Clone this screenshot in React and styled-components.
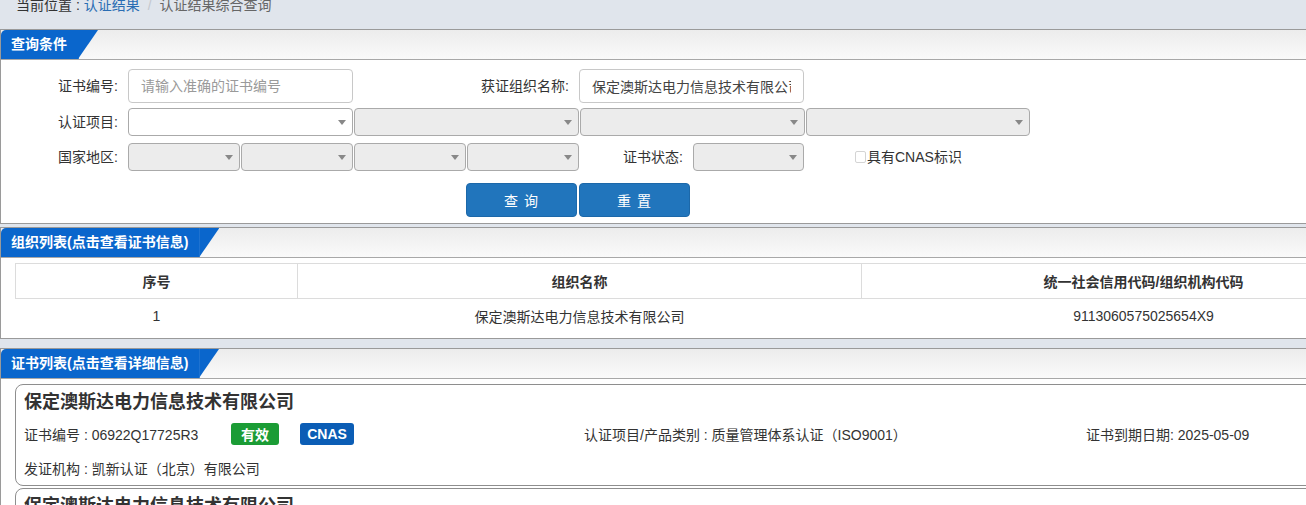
import React from "react";
import styled, { createGlobalStyle } from "styled-components";

const GlobalStyle = createGlobalStyle`
  html, body { margin: 0; padding: 0; overflow: hidden; background: #e0e5ec; }
  body {
    font-family: "Liberation Sans", "Noto Sans CJK SC", sans-serif;
    font-size: 14px;
    color: #333;
  }
  * { box-sizing: border-box; }
`;

const Page = styled.div`
  width: 1441px;
`;

const Breadcrumb = styled.div`
  height: 29px;
  padding-left: 16px;
  line-height: 11px;
  color: #333;
  font-size: 14px;
`;

const Crumb = styled.span`
  color: ${(p) => p.$color || "#333"};
`;

const Sep = styled.span`
  color: #c4c8ce;
  margin: 0 8px;
`;

const Panel = styled.section`
  background: #fff;
  border: 1px solid #9a9a9a;
  margin-bottom: ${(p) => p.$gap || 0}px;
`;

const PanelHeader = styled.div`
  height: 30px;
  display: flex;
  background: linear-gradient(#ececec, #fafafa);
  border-bottom: 1px solid #a8a8a8;
`;

const Tab = styled.div`
  position: relative;
  height: 29px;
  line-height: 29px;
  padding: 0 11px 0 10px;
  background: #0a66cc;
  color: #fff;
  font-weight: bold;
  font-size: 14px;
  border-top-left-radius: 5px;
  border-right: 1px solid #4d8fd9;
  &::after {
    content: "";
    position: absolute;
    left: 100%;
    top: 0;
    width: 20px;
    height: 29px;
    background: #0a66cc;
    clip-path: polygon(0 0, 100% 0, 0 100%);
  }
`;

const FormBody = styled.div`
  padding: 9px 0 6px;
  display: flex;
  flex-direction: column;
`;

const FormRow = styled.div`
  display: flex;
  align-items: center;
  height: ${(p) => p.$h}px;
  margin-top: ${(p) => p.$mt || 0}px;
`;

const Label = styled.label`
  width: ${(p) => p.$w}px;
  padding-right: 10px;
  text-align: right;
  color: #333;
  font-size: 14px;
  line-height: 20px;
  flex-shrink: 0;
`;

const TextInput = styled.input`
  width: ${(p) => p.$w}px;
  height: 34px;
  border: 1px solid #c8c8c8;
  border-radius: 4px;
  padding: 0 12px;
  font-family: inherit;
  font-size: 14px;
  color: #444;
  background: #fff;
  outline: none;
  &::placeholder { color: #9a9a9a; }
`;

const SelectBox = styled.div`
  position: relative;
  width: ${(p) => p.$w}px;
  height: 28px;
  border: 1px solid #aaa;
  border-radius: 4px;
  background: ${(p) => (p.$disabled ? "#ececec" : "#fff")};
  flex-shrink: 0;
  &::after {
    content: "";
    position: absolute;
    right: 6px;
    top: 11px;
    border-left: 4px solid transparent;
    border-right: 4px solid transparent;
    border-top: 5px solid #888;
  }
`;

const Group = styled.div`
  display: flex;
  gap: 1px;
`;

const CheckWrap = styled.label`
  display: flex;
  align-items: center;
  margin-left: 51px;
  font-size: 14px;
  line-height: 20px;
  color: #333;
`;

const Check = styled.span`
  width: 11px;
  height: 12px;
  border: 1px solid #d4d4d4;
  border-radius: 2px;
  background: #fff;
  margin-right: 1px;
`;

const ButtonRow = styled.div`
  display: flex;
  gap: 2px;
  margin: 12px 0 0 465px;
`;

const Button = styled.button`
  width: 111px;
  height: 34px;
  background: #2175bc;
  border: 1px solid #1c68a9;
  border-radius: 4px;
  color: #fff;
  font-family: inherit;
  font-size: 14px;
  letter-spacing: 1px;
  cursor: pointer;
`;

const TableBody = styled.div`
  padding: 5px 14px 5px;
`;

const Table = styled.table`
  width: 1411px;
  border-collapse: collapse;
  font-size: 14px;
  color: #333;
`;

const Th = styled.th`
  width: ${(p) => p.$w};
  height: 35px;
  border: 1px solid #dcdcdc;
  font-weight: bold;
  text-align: center;
`;

const Td = styled.td`
  height: 34px;
  text-align: center;
`;

const CardList = styled.div`
  padding: 5px 14px 0;
  display: flex;
  flex-direction: column;
  gap: 2px;
`;

const Card = styled.div`
  border: 1px solid #8e8e8e;
  border-radius: 8px;
  padding: 6px 8px 6px;
`;

const CardTitle = styled.div`
  font-size: 18px;
  font-weight: bold;
  line-height: 22px;
  color: #333;
`;

const CardRow = styled.div`
  display: flex;
  align-items: center;
  height: 22px;
  margin-top: ${(p) => p.$mt}px;
  font-size: 14px;
  color: #333;
`;

const Cell = styled.span`
  width: ${(p) => (p.$w ? `${p.$w}px` : "auto")};
  flex-shrink: 0;
  white-space: nowrap;
`;

const Badge = styled.span`
  display: inline-flex;
  align-items: center;
  justify-content: center;
  width: ${(p) => p.$w}px;
  height: 22px;
  margin-right: ${(p) => p.$mr || 0}px;
  border-radius: 3px;
  background: ${(p) => p.$bg};
  color: #fff;
  font-weight: bold;
  font-size: 14px;
  flex-shrink: 0;
`;

function Select({ w, disabled }) {
  return <SelectBox $w={w} $disabled={disabled} />;
}

function CertCard() {
  return (
    <Card>
      <CardTitle>保定澳斯达电力信息技术有限公司</CardTitle>
      <CardRow $mt={10}>
        <Cell $w={207}>证书编号 : 06922Q17725R3</Cell>
        <Badge $w={48} $mr={21} $bg="#1b9c35">有效</Badge>
        <Badge $w={54} $bg="#0b5db5">CNAS</Badge>
        <Cell $w={230} />
        <Cell $w={502}>认证项目/产品类别 : 质量管理体系认证（ISO9001）</Cell>
        <Cell>证书到期日期: 2025-05-09</Cell>
      </CardRow>
      <CardRow $mt={12}>
        <Cell>发证机构 : 凯新认证（北京）有限公司</Cell>
      </CardRow>
    </Card>
  );
}

export default function App() {
  return (
    <Page>
      <GlobalStyle />
      <Breadcrumb>
        <Crumb>当前位置 : </Crumb>
        <Crumb $color="#2a6db3">认证结果</Crumb>
        <Sep>/</Sep>
        <Crumb $color="#666">认证结果综合查询</Crumb>
      </Breadcrumb>

      <Panel $gap={3}>
        <PanelHeader>
          <Tab>查询条件</Tab>
        </PanelHeader>
        <FormBody>
          <FormRow $h={34}>
            <Label $w={127}>证书编号:</Label>
            <TextInput $w={225} placeholder="请输入准确的证书编号" />
            <Label $w={226}>获证组织名称:</Label>
            <TextInput $w={225} defaultValue="保定澳斯达电力信息技术有限公司" />
          </FormRow>
          <FormRow $h={28} $mt={5}>
            <Label $w={127}>认证项目:</Label>
            <Group>
              <Select w={225} />
              <Select w={225} disabled />
              <Select w={225} disabled />
              <Select w={224} disabled />
            </Group>
          </FormRow>
          <FormRow $h={28} $mt={7}>
            <Label $w={127}>国家地区:</Label>
            <Group>
              <Select w={112} disabled />
              <Select w={112} disabled />
              <Select w={112} disabled />
              <Select w={112} disabled />
            </Group>
            <Label $w={114}>证书状态:</Label>
            <Select w={111} disabled />
            <CheckWrap>
              <Check />
              具有CNAS标识
            </CheckWrap>
          </FormRow>
          <ButtonRow>
            <Button>查 询</Button>
            <Button>重 置</Button>
          </ButtonRow>
        </FormBody>
      </Panel>

      <Panel $gap={9}>
        <PanelHeader>
          <Tab>组织列表(点击查看证书信息)</Tab>
        </PanelHeader>
        <TableBody>
          <Table>
            <thead>
              <tr>
                <Th $w="20%">序号</Th>
                <Th $w="40%">组织名称</Th>
                <Th $w="40%">统一社会信用代码/组织机构代码</Th>
              </tr>
            </thead>
            <tbody>
              <tr>
                <Td>1</Td>
                <Td>保定澳斯达电力信息技术有限公司</Td>
                <Td>9113060575025654X9</Td>
              </tr>
            </tbody>
          </Table>
        </TableBody>
      </Panel>

      <Panel>
        <PanelHeader>
          <Tab>证书列表(点击查看详细信息)</Tab>
        </PanelHeader>
        <CardList>
          <CertCard />
          <CertCard />
        </CardList>
      </Panel>
    </Page>
  );
}
